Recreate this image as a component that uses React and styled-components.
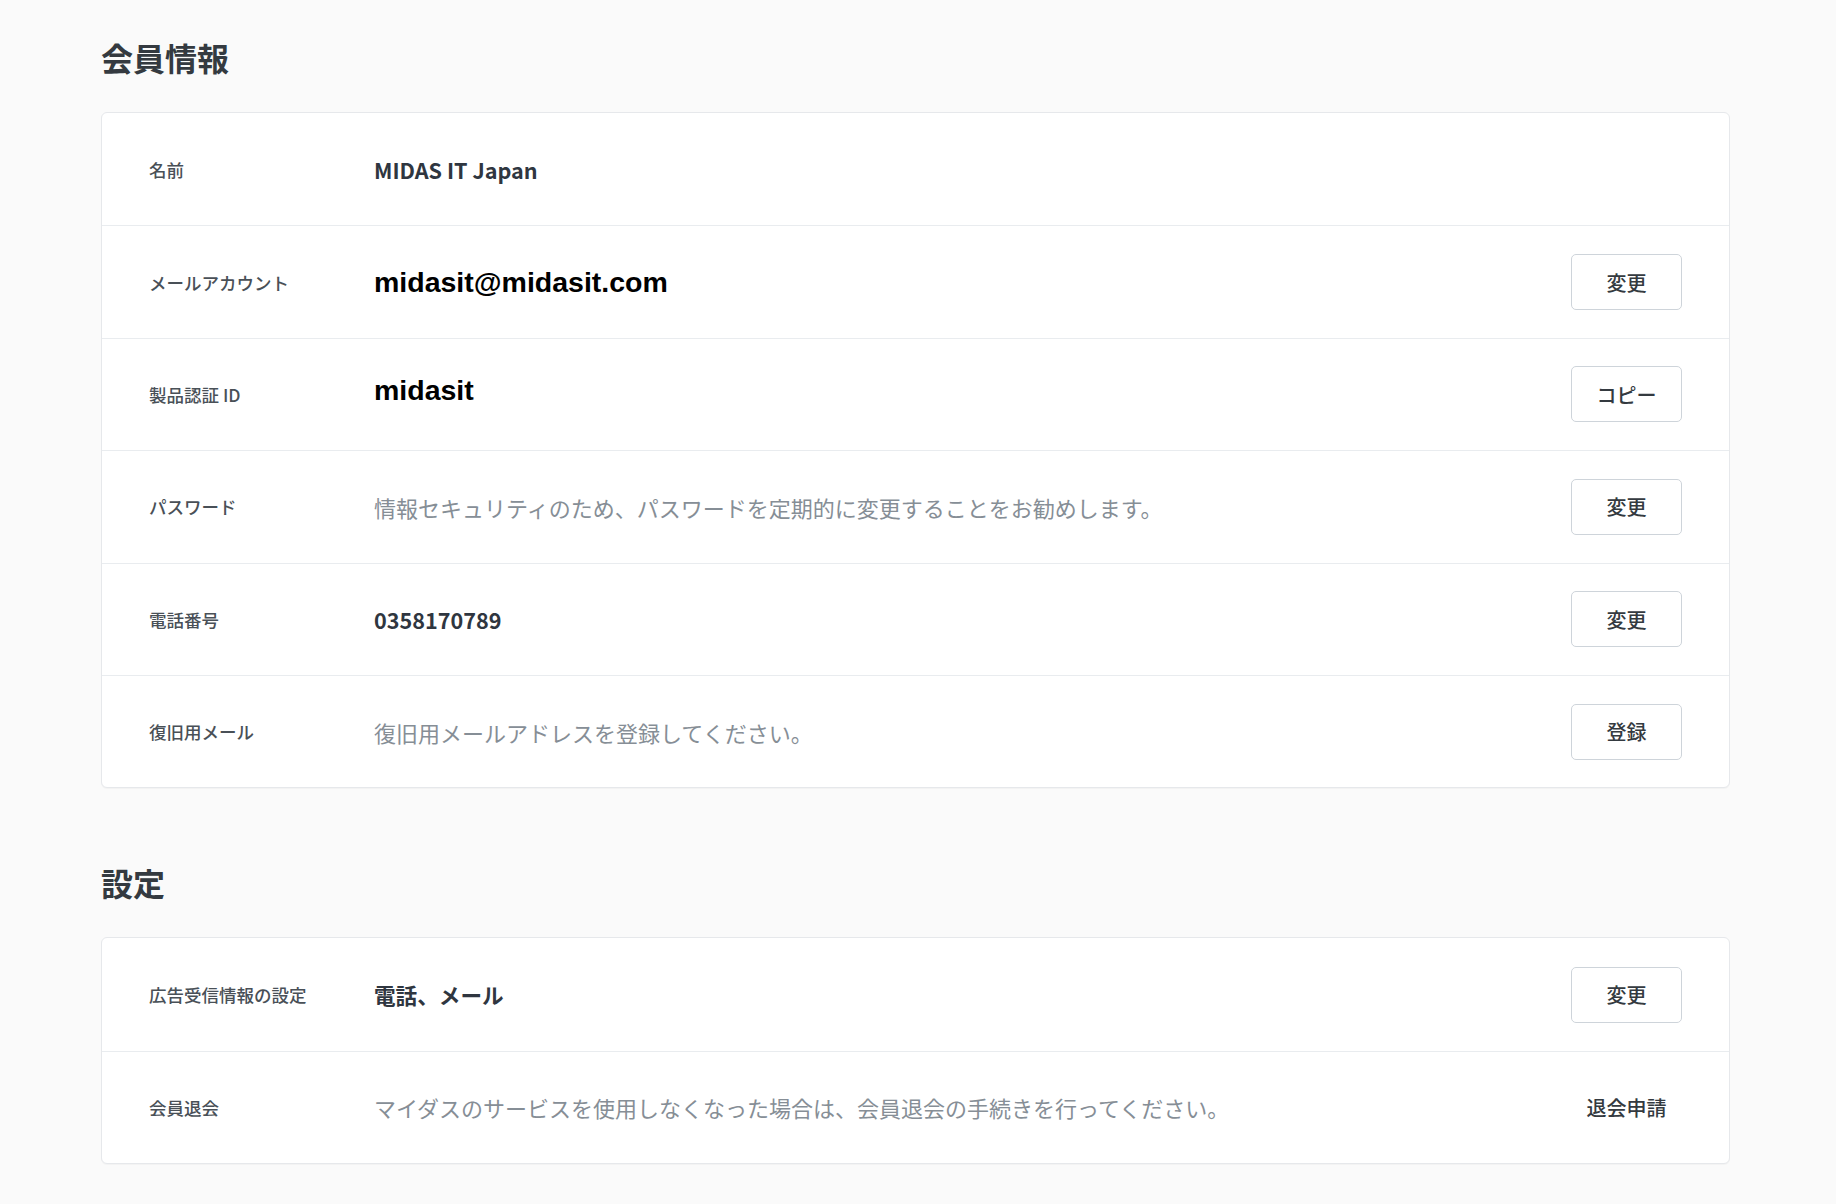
import styled, {createGlobalStyle} from "styled-components";

const GlobalStyle = createGlobalStyle`
  html, body {
    margin: 0;
    padding: 0;
    background: #fafafa;
  }
  body {
    font-family: "Noto Sans CJK JP", "Noto Sans", sans-serif;
    color: #343a40;
  }
`;

const Page = styled.div`
  min-height: 1204px;
  padding: 33px 106px 40px 101px;
  box-sizing: border-box;
`;

const Section = styled.section`
  & + & {
    margin-top: 70px;
  }
`;

const Title = styled.h2`
  margin: 0 0 31px;
  font-size: 32px;
  line-height: 48px;
  font-weight: 700;
  color: #343a40;
`;

const Card = styled.div`
  background: #ffffff;
  border: 1px solid #e6e8eb;
  border-radius: 6px;
  box-shadow: 0 1px 1px rgba(0, 0, 0, 0.03);
  overflow: hidden;
`;

const Row = styled.div`
  display: flex;
  align-items: center;
  height: 112.4px;
  box-sizing: border-box;
  padding: 0 47px 0 47px;

  & + & {
    border-top: 1px solid #e9ecef;
  }
`;

const Label = styled.div`
  width: 225px;
  flex-shrink: 0;
  font-size: 17.5px;
  font-weight: 500;
  color: #495057;
`;

const Value = styled.div`
  flex: 1;
  font-size: 21.6px;
  font-weight: 700;
  color: #2f3640;
  ${props => props.$large && `
    font-family: "Liberation Sans", Arial, sans-serif;
    font-size: 28.5px;
    color: #000;
  `}
  ${props => props.$raised && `
    margin-bottom: 8px;
  `}
`;

const Hint = styled.div`
  flex: 1;
  font-size: 22px;
  font-weight: 400;
  color: #868e96;
`;

const Button = styled.button`
  width: 111px;
  height: 56px;
  flex-shrink: 0;
  font-family: "Noto Sans CJK JP", "Noto Sans", sans-serif;
  font-size: 20px;
  font-weight: 500;
  color: #343a40;
  background: ${props => props.$plain ? "transparent" : "#ffffff"};
  border: 1px solid ${props => props.$plain ? "transparent" : "#ced4da"};
  border-radius: 5px;
  cursor: pointer;
`;

const memberRows = [
    {label: "名前", value: "MIDAS IT Japan"},
    {label: "メールアカウント", value: "midasit@midasit.com", large: true, action: "変更"},
    {label: "製品認証 ID", value: "midasit", large: true, raised: true, action: "コピー"},
    {label: "パスワード", hint: "情報セキュリティのため、パスワードを定期的に変更することをお勧めします。", action: "変更"},
    {label: "電話番号", value: "0358170789", action: "変更"},
    {label: "復旧用メール", hint: "復旧用メールアドレスを登録してください。", action: "登録"},
];

const settingRows = [
    {label: "広告受信情報の設定", value: "電話、メール", action: "変更"},
    {label: "会員退会", hint: "マイダスのサービスを使用しなくなった場合は、会員退会の手続きを行ってください。", action: "退会申請", plain: true},
];

const InfoRow = ({item}) => (
    <Row>
        <Label>{item.label}</Label>
        {item.hint
            ? <Hint>{item.hint}</Hint>
            : <Value $large={item.large} $raised={item.raised}>{item.value}</Value>
        }
        {item.action ? <Button $plain={item.plain}>{item.action}</Button> : ""}
    </Row>
);

const App = () => {
    return (
        <Page>
            <GlobalStyle/>
            <Section>
                <Title>会員情報</Title>
                <Card>
                    {memberRows.map((item, i) => <InfoRow key={i} item={item}/>)}
                </Card>
            </Section>
            <Section>
                <Title>設定</Title>
                <Card>
                    {settingRows.map((item, i) => <InfoRow key={i} item={item}/>)}
                </Card>
            </Section>
        </Page>
    )
}

export default App;
